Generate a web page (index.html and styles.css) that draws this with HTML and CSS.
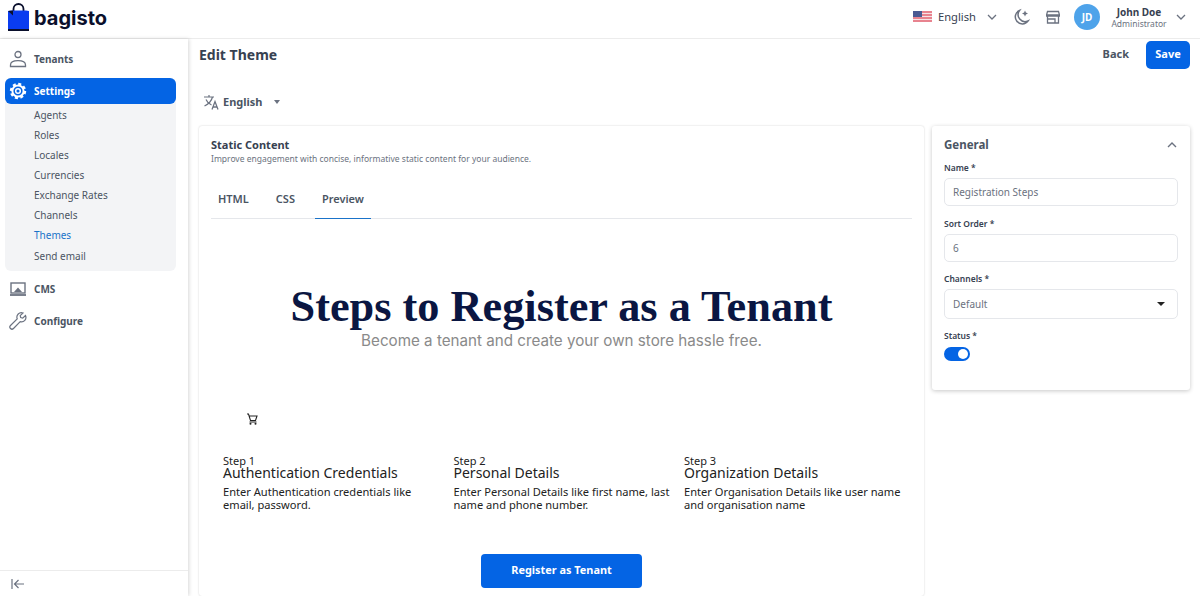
FILE: index.html
```html
<!DOCTYPE html>
<html>
  <head>
    <title>Edit Theme</title>
    <link rel="stylesheet" href="styles.css">
  </head>
  <body>
    <header class="topbar">
      <div class="brand">
        <svg class="brandIcon" viewBox="0 0 21 28" width="21" height="28">
          <path d="M5.500 11V6a5 5 0 0 1 10 0v5" fill="none" stroke="#0a0f2c" stroke-width="1.800"/>
          <path d="M3 7.500h15l3 .5v18H0V8z" fill="#0a3cf0"/>
          <path d="M0 8l5 -.5v5z" fill="#0a0f2c"/>
          <path d="M0 26h21v2H0z" fill="#0a0f2c"/>
        </svg>
        <span class="brandName">bagisto</span>
      </div>
      <div class="topRight">
        <svg class="flag" viewBox="0 0 19 11" width="19" height="11">
          <rect width="19" height="11" fill="#e8838f"/>
          <path d="M0 2.500h19M0 5.500h19M0 8.500h19" stroke="#f6e3e5" stroke-width="1"/>
          <rect width="9" height="6" fill="#4a5a92"/>
        </svg>
        <span class="langName">English</span>
        <svg class="chev langChev" viewBox="0 0 10 6" width="10" height="6"><path d="M1 1l4 4 4-4" fill="none" stroke="#6b7280" stroke-width="1.300"/></svg>
        <svg class="topIcon moon" viewBox="0 0 18 18" width="18" height="18">
          <path d="M7.500 2.500a7 7 0 1 0 8.500 10.500 7 7 0 0 1-8.500-10.500z" fill="none" stroke="#6b7280" stroke-width="1.500"/>
          <path d="M13 2.500l.9 2.100 2.100.9-2.100.9-.9 2.100-.9-2.100-2.100-.9 2.100-.9z" fill="#6b7280"/>
        </svg>
        <svg class="topIcon store" viewBox="0 0 14 14" width="14" height="14">
          <path d="M1.500 1.500h11l1 3.500v1.200H.5V5zM1.500 6.500v6.500h11V6.500M.8 4.800h12.400M1.500 9h7.500v4" fill="none" stroke="#6b7280" stroke-width="1.300"/>
        </svg>
        <div class="avatar">JD</div>
        <div class="userBox">
          <span class="userName">John Doe</span>
          <span class="userRole">Administrator</span>
        </div>
        <svg class="chev" viewBox="0 0 10 6" width="10" height="6"><path d="M1 1l4 4 4-4" fill="none" stroke="#6b7280" stroke-width="1.300"/></svg>
      </div>
    </header>

    <div class="layout">
      <aside class="sidebar">
        <nav class="menu">
          <a class="menuItem">
            <svg viewBox="0 0 18 18" width="18" height="18"><circle cx="9" cy="4.500" r="3" fill="none" stroke="#6b7280" stroke-width="1.300"/><path d="M1.500 16.500v-1.500c0-2.500 3-4.300 7.500-4.300s7.500 1.800 7.500 4.300v1.500z" fill="none" stroke="#6b7280" stroke-width="1.300"/></svg>
            <span>Tenants</span>
          </a>
          <div class="menuGroup">
            <a class="menuItem active">
              <svg viewBox="0 0 18 18" width="18" height="18"><circle cx="9" cy="9" r="5.600" fill="none" stroke="#fff" stroke-width="2"/><circle cx="9" cy="9" r="7" fill="none" stroke="#fff" stroke-width="2.400" stroke-dasharray="3 2.500"/><circle cx="9" cy="9" r="2.300" fill="none" stroke="#fff" stroke-width="1.500"/></svg>
              <span>Settings</span>
            </a>
            <ul class="subMenu">
              <li>Agents</li>
              <li>Roles</li>
              <li>Locales</li>
              <li>Currencies</li>
              <li>Exchange Rates</li>
              <li>Channels</li>
              <li class="current">Themes</li>
              <li class="last">Send email</li>
            </ul>
          </div>
          <a class="menuItem">
            <svg viewBox="0 0 18 18" width="18" height="18"><rect x="2" y="3" width="14" height="10" fill="#fff" stroke="#6b7280" stroke-width="1.400"/><path d="M1 15h16" stroke="#6b7280" stroke-width="1.800"/><path d="M5 12l4-4.500 4 4.500z" fill="#6b7280"/></svg>
            <span>CMS</span>
          </a>
          <a class="menuItem">
            <svg viewBox="0 0 18 18" width="18" height="18"><path d="M16.500 3.500l-2.800 2.600-2-.5-.5-2L14 1a4.500 4.500 0 0 0-5.800 5.800L1.500 13.500a2 2 0 0 0 3 3l6.700-6.800a4.500 4.500 0 0 0 5.300-6.200z" fill="none" stroke="#6b7280" stroke-width="1.200"/></svg>
            <span>Configure</span>
          </a>
        </nav>
        <div class="sideFooter">
          <svg viewBox="0 0 14 12" width="14" height="12"><path d="M1 1v10M13 6H4M7.500 2L3.500 6l4 4" fill="none" stroke="#6b7280" stroke-width="1.200"/></svg>
        </div>
      </aside>

      <main class="content">
        <div class="titleRow">
          <h1 class="pageTitle">Edit Theme</h1>
          <div class="actions">
            <a class="backLink">Back</a>
            <button class="saveBtn">Save</button>
          </div>
        </div>
        <div class="localeRow">
          <svg viewBox="0 0 17 16" width="17" height="16"><path d="M1 3h10M6 1v2M9.500 3C8.500 7 5.500 10 1.500 12M3 5.500c1 2.500 3 4.500 5.500 5.500" fill="none" stroke="#6b7280" stroke-width="1.200"/><path d="M9 15.500l3-8 3 8M10 13h4" fill="none" stroke="#6b7280" stroke-width="1.300"/></svg>
          <span class="localeName">English</span>
          <span class="caret"></span>
        </div>

        <div class="columns">
          <section class="card mainCard">
            <h2 class="cardTitle">Static Content</h2>
            <p class="cardDesc">Improve engagement with concise, informative static content for your audience.</p>
            <div class="tabs">
              <span class="tab">HTML</span>
              <span class="tab">CSS</span>
              <span class="tab selected">Preview</span>
            </div>
            <div class="preview">
              <h2 class="heroTitle">Steps to Register as a Tenant</h2>
              <p class="heroText">Become a tenant and create your own store hassle free.</p>
              <svg class="cart" viewBox="0 0 12 12" width="12" height="12"><path d="M1 1h1.500l2 6.500h5L11 3H3.200M3.500 9h7" fill="none" stroke="#222" stroke-width="1.100"/><circle cx="4.500" cy="10.700" r="1" fill="#222"/><circle cx="9.500" cy="10.700" r="1" fill="#222"/></svg>
              <div class="steps">
                <div class="step">
                  <span class="stepNo">Step 1</span>
                  <h3 class="stepTitle">Authentication Credentials</h3>
                  <p class="stepText">Enter Authentication credentials like email, password.</p>
                </div>
                <div class="step">
                  <span class="stepNo">Step 2</span>
                  <h3 class="stepTitle">Personal Details</h3>
                  <p class="stepText">Enter Personal Details like first name, last name and phone number.</p>
                </div>
                <div class="step">
                  <span class="stepNo">Step 3</span>
                  <h3 class="stepTitle">Organization Details</h3>
                  <p class="stepText">Enter Organisation Details like user name and organisation name</p>
                </div>
              </div>
              <button class="registerBtn">Register as Tenant</button>
            </div>
          </section>

          <section class="card sideCard">
            <div class="sideHead">
              <h2 class="sideTitle">General</h2>
              <svg viewBox="0 0 10 6" width="10" height="6"><path d="M1 5l4-4 4 4" fill="none" stroke="#6b7280" stroke-width="1.400"/></svg>
            </div>
            <label class="fieldLabel">Name *</label>
            <div class="field">Registration Steps</div>
            <label class="fieldLabel">Sort Order *</label>
            <div class="field">6</div>
            <label class="fieldLabel">Channels *</label>
            <div class="field selectField">Default<span class="selectCaret"></span></div>
            <label class="fieldLabel statusLabel">Status *</label>
            <span class="toggle"><span class="knob"></span></span>
          </section>
        </div>
      </main>
    </div>
  </body>
</html>
```

FILE: styles.css
```css
* {
  box-sizing: border-box;
}

html, body {
  margin: 0;
  height: 596px;
  overflow: hidden;
}

body {
  background: #fff;
  color: #4b5563;
  font-family: "Noto Sans", sans-serif;
  font-size: 11px;
}

h1, h2, h3, p, ul {
  margin: 0;
  padding: 0;
}

/* top bar */
.topbar {
  height: 39px;
  display: flex;
  align-items: center;
  justify-content: space-between;
  border-bottom: 1px solid #ececec;
  padding: 0 14px 0 8px;
}

.brand {
  display: flex;
  align-items: center;
  gap: 5px;
}

.brandIcon {
  margin-bottom: 5px;
}

.brandName {
  font-family: Inter, sans-serif;
  font-size: 20px;
  font-weight: 700;
  color: #0a0f2c;
  padding-bottom: 2px;
}

.topRight {
  display: flex;
  align-items: center;
  padding-bottom: 5px;
}

.langName {
  font-size: 11.200px;
  color: #374151;
  margin-left: 6px;
}

.langChev {
  margin-left: 11px;
}

.moon {
  margin-left: 15px;
}

.store {
  margin-left: 16px;
}

.avatar {
  width: 26px;
  height: 26px;
  margin-left: 14px;
  border-radius: 50%;
  background: #4ea3ea;
  color: #fff;
  font-size: 10px;
  font-weight: 700;
  display: flex;
  align-items: center;
  justify-content: center;
}

.userBox {
  width: 66px;
  display: flex;
  flex-direction: column;
  align-items: center;
  line-height: 12px;
  margin: 3px 4px 0 6px;
}

.userName {
  font-size: 10px;
  font-weight: 700;
  color: #374151;
}

.userRole {
  font-size: 8.500px;
  color: #6b7280;
}

.layout {
  display: flex;
  height: 557px;
}

/* sidebar */
.sidebar {
  width: 188px;
  flex: none;
  display: flex;
  flex-direction: column;
  justify-content: space-between;
  box-shadow: 1px 0 4px rgba(0, 0, 0, 0.16);
}

.menu {
  padding: 7px 12px 0 5px;
}

.menuItem {
  display: flex;
  align-items: center;
  gap: 7px;
  height: 26px;
  padding-left: 4px;
  margin-bottom: 6px;
  font-size: 10px;
  font-weight: 700;
  color: #4b5563;
  border-radius: 6px;
}

.menuGroup {
  background: #f3f4f6;
  border-radius: 6px;
  margin-bottom: 5px;
}

.menuItem.active {
  background: #0464e4;
  color: #fff;
  margin-bottom: 0;
}

.subMenu {
  list-style: none;
  padding: 1px 0 5px 29px;
}

.subMenu li {
  height: 20px;
  line-height: 20px;
  font-size: 10px;
  color: #4b5563;
}

.subMenu li.current {
  color: #1a73c9;
}

.subMenu li.last {
  margin-top: 1px;
}

.sideFooter {
  height: 26px;
  border-top: 1px solid #ececec;
  padding: 7px 0 0 11px;
}

/* main area */
.content {
  flex: 1;
  padding: 0 10px 0 11px;
  min-width: 0;
}

.titleRow {
  height: 32px;
  display: flex;
  align-items: center;
  justify-content: space-between;
}

.pageTitle {
  font-size: 14px;
  font-weight: 700;
  color: #374151;
  padding-bottom: 2px;
}

.actions {
  display: flex;
  align-items: center;
  gap: 17px;
}

.backLink {
  font-size: 11px;
  font-weight: 700;
  color: #4b5563;
  padding-bottom: 3px;
}

.saveBtn {
  width: 44px;
  height: 28px;
  border: 0;
  border-radius: 5px;
  padding: 0 0 3px;
  background: #0464e4;
  color: #fff;
  font-family: inherit;
  font-size: 11px;
  font-weight: 700;
}

.localeRow {
  height: 55px;
  margin-left: 4px;
  padding-top: 7px;
  display: flex;
  align-items: center;
  gap: 3px;
}

.localeName {
  font-size: 11px;
  font-weight: 700;
  color: #4b5563;
  padding-bottom: 2px;
}

.caret {
  margin-left: 8px;
  border-left: 3.500px solid transparent;
  border-right: 3.500px solid transparent;
  border-top: 4px solid #6b7280;
}

.columns {
  display: flex;
  align-items: flex-start;
  gap: 8px;
}

.card {
  background: #fff;
  border-radius: 3px;
  box-shadow: 0 0 2px rgba(0, 0, 0, 0.2);
}

.mainCard {
  width: 725px;
  height: 470px;
  padding: 11px 12px 0;
}

.cardTitle {
  font-size: 11px;
  line-height: 15px;
  font-weight: 700;
  color: #374151;
}

.cardDesc {
  font-size: 8.500px;
  line-height: 13px;
  color: #6b7280;
}

.tabs {
  height: 49px;
  margin-top: 5px;
  display: flex;
  border-bottom: 1px solid #e5e7eb;
}

.tab {
  height: 49px;
  padding: 10px 7px 0;
  margin-right: 13px;
  font-size: 11px;
  font-weight: 600;
  line-height: 38px;
  color: #4b5563;
}

.tab.selected {
  border-bottom: 1px solid #1a73c9;
}

/* preview of the theme */
.preview {
  display: flex;
  flex-direction: column;
}

.heroTitle {
  margin-top: 63px;
  font-family: "Liberation Serif", serif;
  font-size: 44.300px;
  line-height: 50px;
  font-weight: 700;
  color: #0a1642;
  text-align: center;
}

.heroText {
  margin-top: -1px;
  font-family: Inter, sans-serif;
  font-size: 15.200px;
  line-height: 20px;
  color: #8a8a8a;
  text-align: center;
}

.cart {
  margin: 62px 0 0 35px;
}

.steps {
  margin: 30px 0 0 12px;
  display: grid;
  grid-template-columns: repeat(3, 230.500px);
  color: #222;
}

.step {
  padding-right: 10px;
}

.stepNo {
  display: block;
  font-size: 11px;
  line-height: 11px;
}

.stepTitle {
  font-size: 14px;
  line-height: 13px;
  font-weight: 400;
  margin-bottom: 7px;
}

.stepText {
  font-size: 11.100px;
  line-height: 12.500px;
}

.registerBtn {
  align-self: center;
  width: 161px;
  height: 34px;
  margin-top: 43px;
  padding: 0 0 3px;
  border: 0;
  border-radius: 4px;
  background: #0464e4;
  color: #fff;
  font-family: inherit;
  font-size: 10.900px;
  font-weight: 700;
}

/* general panel */
.sideCard {
  width: 258px;
  height: 264px;
  padding: 11px 12px 0;
  box-shadow: 0 1px 4px rgba(0, 0, 0, 0.22);
}

.sideHead {
  display: flex;
  align-items: center;
  justify-content: space-between;
  padding-right: 1px;
  height: 15px;
  margin-bottom: 10px;
}

.sideTitle {
  font-size: 11.500px;
  font-weight: 700;
  color: #4b5563;
}

.fieldLabel {
  display: block;
  font-size: 8.500px;
  line-height: 12px;
  font-weight: 600;
  color: #374151;
  margin-bottom: 4px;
}

.field {
  height: 28px;
  margin-bottom: 11.500px;
  padding: 0 8px;
  border: 1px solid #e5e7eb;
  border-radius: 5px;
  font-size: 10px;
  line-height: 27px;
  color: #6b7280;
}

.selectField {
  height: 30px;
  margin-bottom: 11px;
  display: flex;
  align-items: center;
  justify-content: space-between;
  padding-right: 12px;
}

.selectCaret {
  border-left: 4px solid transparent;
  border-right: 4px solid transparent;
  border-top: 4px solid #222;
}

.statusLabel {
  margin-bottom: 5px;
}

.toggle {
  display: block;
  width: 26px;
  height: 14px;
  border-radius: 7px;
  background: #0464e4;
  position: relative;
}

.knob {
  position: absolute;
  top: 2px;
  right: 2px;
  width: 10px;
  height: 10px;
  border-radius: 50%;
  background: #fff;
}
```
